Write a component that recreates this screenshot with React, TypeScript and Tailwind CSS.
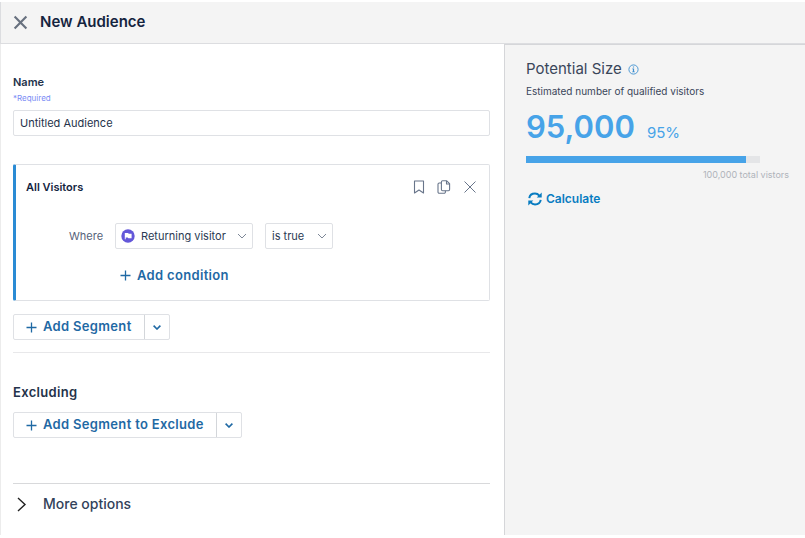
import type { ReactNode } from "react";

type IconProps = { className?: string };

function CloseIcon({ className }: IconProps) {
  return (
    <svg viewBox="0 0 14 14" className={className} fill="none" stroke="currentColor" aria-hidden="true">
      <path d="M1.500 1.500l11 11M12.500 1.500l-11 11" />
    </svg>
  );
}

function BookmarkIcon({ className }: IconProps) {
  return (
    <svg viewBox="0 0 12 14" className={className} fill="none" stroke="currentColor" strokeWidth="1.1" aria-hidden="true">
      <path d="M1.5 1h9v12L6 10 1.5 13z" strokeLinejoin="round" />
    </svg>
  );
}

function CopyIcon({ className }: IconProps) {
  return (
    <svg viewBox="0 0 14 14" className={className} fill="none" stroke="currentColor" strokeWidth="1.1" strokeLinejoin="round" aria-hidden="true">
      <path d="M5.6.8h4.1L12.6 3.7v5.8a1.2 1.2 0 0 1-1.2 1.2H5.600a1.2 1.2 0 0 1-1.2-1.2V2A1.2 1.2 0 0 1 5.600.8z" />
      <path d="M9.500 1v3h3" />
      <path d="M4.400 3H2.200A1.2 1.2 0 0 0 1 4.200v7.800a1.2 1.2 0 0 0 1.2 1.2h5a1.2 1.2 0 0 0 1.2-1.2v-1.2" />
    </svg>
  );
}

function PlusIcon({ className }: IconProps) {
  return (
    <svg viewBox="0 0 11 11" className={className} fill="none" stroke="currentColor" strokeWidth="1.3" aria-hidden="true">
      <path d="M5.500.5v10M.5 5.500h10" />
    </svg>
  );
}

function ChevronIcon({ className, weight = 1 }: IconProps & { weight?: number }) {
  return (
    <svg viewBox="0 0 10 6" className={className} fill="none" stroke="currentColor" strokeWidth={weight} aria-hidden="true">
      <path d="M1 1l4 4 4-4" />
    </svg>
  );
}

function SmallChevronIcon() {
  return (
    <svg viewBox="0 0 8 5" className="h-[5px] w-2" fill="none" stroke="currentColor" strokeWidth="1.6" aria-hidden="true">
      <path d="M.6.6 4 4 7.400.6" />
    </svg>
  );
}

function FlagBadge() {
  return (
    <svg viewBox="0 0 14 14" className="pointer-events-none absolute left-1.5 size-3.5" aria-hidden="true">
      <circle cx="7" cy="7" r="6.7" fill="#6357d9" />
      <path d="M3.800 4h3.300l.6.8h2.900v4.400H7.400l-.7-.7H4.700v1.800h-.9z" fill="#fff" />
    </svg>
  );
}

function RefreshIcon({ className }: IconProps) {
  return (
    <svg viewBox="0 0 14 14" className={className} fill="none" stroke="currentColor" strokeWidth="2" aria-hidden="true">
      <path d="M1.300 6.200C1.700 3.500 4.100 1.600 7 1.600c1.800 0 3.300.8 4.300 2M12.700 7.800c-.4 2.700-2.800 4.600-5.700 4.600-1.800 0-3.300-.8-4.300-2" />
      <path d="M13.700.6v5H8.700zM.3 13.400v-5h5z" fill="currentColor" stroke="none" />
    </svg>
  );
}

function InfoIcon() {
  return (
    <svg viewBox="0 0 11 11" className="size-[11px]" aria-hidden="true">
      <circle cx="5.500" cy="5.500" r="4.600" fill="none" stroke="currentColor" strokeWidth=".9" />
      <path d="M4.900 2.500h1.200v1.100H4.900zM4.300 4.500h1.800v3h.7v.8H4.200v-.8h.7V5.300h-.6z" fill="currentColor" />
    </svg>
  );
}

function SelectBox({ label, value, className, icon }: { label: string; value: string; className: string; icon?: ReactNode }) {
  return (
    <div className="relative flex items-center">
      {icon}
      <select
        aria-label={label}
        className={`h-[26px] appearance-none rounded-xs border border-[#dfe1e5] bg-white text-[11px] text-[#2b3a53] ${className}`}
      >
        <option>{value}</option>
      </select>
      <ChevronIcon className="pointer-events-none absolute right-1.5 h-1.5 w-2.5 text-[#7d8797]" />
    </div>
  );
}

function SplitButton({ label }: { label: string }) {
  return (
    <div className="flex h-[26px] w-fit rounded-xs border border-[#dfe1e5] bg-white text-[#1f69a4]">
      <button type="button" className="flex items-center gap-1.5 px-3 text-[13px] font-semibold tracking-wide">
        <PlusIcon className="size-[11px]" />
        {label}
      </button>
      <button type="button" aria-label={`${label} menu`} className="flex w-[25px] items-center justify-center border-l border-[#d3d6da]">
        <SmallChevronIcon />
      </button>
    </div>
  );
}

export default function App() {
  return (
    <div className="flex min-h-screen flex-col bg-white pt-0.5 pb-[3px] font-['Inter','Liberation_Sans',sans-serif] text-[#24324a]">
      <header className="flex h-[42px] items-center gap-3 border-b border-l border-[#dcdde0] bg-[#f4f4f4] pl-3">
        <button type="button" aria-label="Close" className="text-[#68717f]">
          <CloseIcon className="size-[15px] stroke-2" />
        </button>
        <h1 className="text-[15px] font-semibold text-[#14243f]">New Audience</h1>
      </header>

      <div className="flex grow border-l border-[#ececec]">
        <main className="min-w-0 grow pt-[30px] pr-3.5 pl-3">
          <label htmlFor="name" className="block text-[11px] leading-4 font-semibold">
            Name
          </label>
          <p className="text-[8px] leading-4 text-[#7a8cf5]">*Required</p>
          <input
            id="name"
            type="text"
            defaultValue="Untitled Audience"
            className="mt-1 block h-[26px] w-full rounded-xs border border-[#dfe1e5] bg-white px-1.5 text-[11px] text-[#24324a]"
          />

          <section className="mt-7 h-[137px] rounded-xs border border-l-3 border-[#dfe1e5] border-l-[#2a8bd4] pr-3 pl-2.5">
            <div className="flex items-start justify-between pt-3.5">
              <h2 className="text-[11px] leading-4 font-semibold text-[#14243f]">All Visitors</h2>
              <div className="flex h-4 items-center gap-3 text-[#68758a]">
                <button type="button" aria-label="Save segment">
                  <BookmarkIcon className="h-3.5 w-3" />
                </button>
                <button type="button" aria-label="Duplicate segment">
                  <CopyIcon className="size-3.5" />
                </button>
                <button type="button" aria-label="Remove segment">
                  <CloseIcon className="size-3.5" />
                </button>
              </div>
            </div>
            <div className="mt-7 flex items-center pl-[43px]">
              <span className="w-[46px] text-[11px] text-[#56627a]">Where</span>
              <div className="flex gap-3">
                <SelectBox label="Attribute" value="Returning visitor" className="w-[138px] pl-[25px]" icon={<FlagBadge />} />
                <SelectBox label="Value" value="is true" className="w-[68px] pl-1.5" />
              </div>
            </div>
            <button type="button" className="mt-4 ml-[94px] flex items-center gap-1.5 text-[13px] leading-5 font-semibold tracking-wide text-[#1f69a4]">
              <PlusIcon className="size-[11px]" />
              Add condition
            </button>
          </section>

          <div className="mt-[13px] border-b border-[#e8e8ea] pb-3">
            <SplitButton label="Add Segment" />
          </div>

          <h2 className="mt-[29px] mb-2.5 text-[13px] leading-5 font-semibold tracking-wide">Excluding</h2>
          <SplitButton label="Add Segment to Exclude" />

          <div className="mt-[45px] border-t border-[#d8d9db] pt-2.5">
            <button type="button" className="flex items-center gap-4 pl-1 text-[14px] leading-5 font-medium text-[#33425a]">
              <svg viewBox="0 0 10 15" className="h-[15px] w-2.5" fill="none" stroke="#222" strokeWidth="1.4" aria-hidden="true">
                <path d="M1 1l7 6.500L1 14" />
              </svg>
              More options
            </button>
          </div>
        </main>

        <aside className="w-[301px] shrink-0 border-t border-l border-[#d5d6d9] bg-[#f4f4f4] pt-3.5 pr-4 pl-[21px]">
          <div className="flex items-center gap-1.5">
            <h2 className="text-[15px] leading-5 text-[#3a465a]">Potential Size</h2>
            <button type="button" aria-label="About potential size" className="text-[#3c8ed0]">
              <InfoIcon />
            </button>
          </div>
          <p className="mt-0.5 text-[10px] leading-5 text-[#3a465a]">Estimated number of qualified visitors</p>
          <p className="mt-2 flex items-baseline gap-3 text-[#47a3e8]">
            <span className="text-[31px] leading-9 font-semibold">95,000</span>
            <span className="text-[15px] leading-5">95%</span>
          </p>
          <div className="mt-[11px] mr-[29px] h-[7px] bg-[#e4e5e7]" role="progressbar" aria-label="Qualified visitors" aria-valuenow={95}>
            <div className="h-full w-[94%] bg-[#47a3e8]" />
          </div>
          <p className="mt-1 text-right text-[9px] leading-4 text-[#afb3ba]">100,000 total vistors</p>
          <button type="button" className="mt-1.5 ml-0.5 flex items-center gap-1 text-[12px] leading-5 font-semibold text-[#087cc1]">
            <RefreshIcon className="size-3.5" />
            Calculate
          </button>
        </aside>
      </div>
    </div>
  );
}
